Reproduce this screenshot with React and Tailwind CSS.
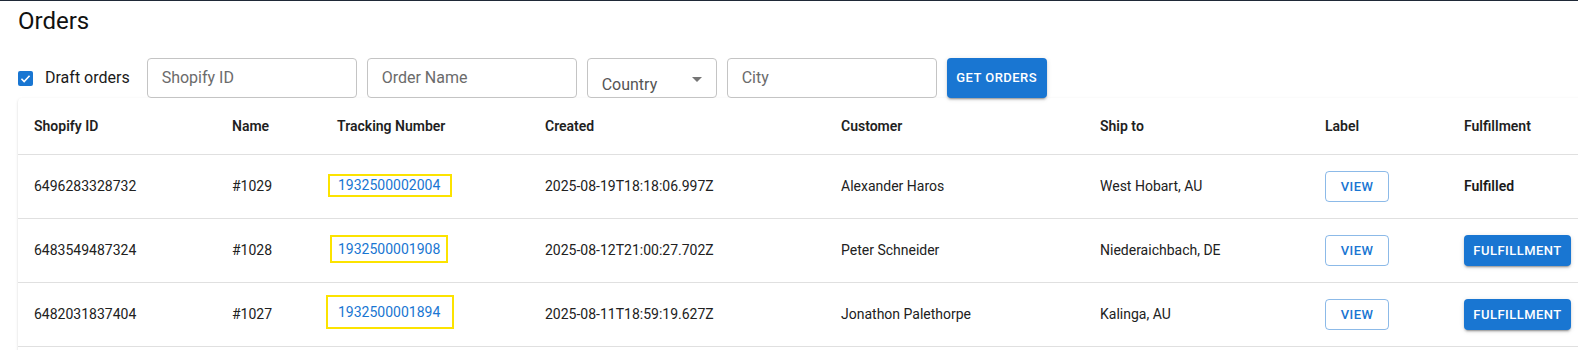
import React from "react";

const cols = "grid grid-cols-[198px_105px_208px_296px_259px_225px_139px_170px]";

const rows = [
  {
    id: "6496283328732",
    name: "#1029",
    tracking: "1932500002004",
    box: "-ml-[9px] pl-[8px] pr-[10px] leading-[19px] -mt-[3px]",
    created: "2025-08-19T18:18:06.997Z",
    customer: "Alexander Haros",
    ship: "West Hobart, AU",
    fulfilled: true,
  },
  {
    id: "6483549487324",
    name: "#1028",
    tracking: "1932500001908",
    box: "-ml-[7px] pl-[6px] pr-[6px] py-[2px] leading-[20px] -mt-[4px]",
    created: "2025-08-12T21:00:27.702Z",
    customer: "Peter Schneider",
    ship: "Niederaichbach, DE",
    fulfilled: false,
  },
  {
    id: "6482031837404",
    name: "#1027",
    tracking: "1932500001894",
    box: "-ml-[11px] pl-[10px] pr-[12px] py-[5px] leading-[20px] -mt-[5px]",
    created: "2025-08-11T18:59:19.627Z",
    customer: "Jonathon Palethorpe",
    ship: "Kalinga, AU",
    fulfilled: false,
  },
];

function Field({ placeholder, w }) {
  return (
    <div
      className={`${w} h-[40px] box-border border border-[#c4c4c4] rounded-[4px] flex items-center pl-[14px] text-[16px] text-[#6b6b6b]`}
    >
      {placeholder}
    </div>
  );
}

export default function App() {
  return (
    <div
      className="w-full h-[350px] overflow-hidden bg-white border-t border-[#1f2937] pl-[18px]"
      style={{ fontFamily: "Roboto, 'Liberation Sans', sans-serif" }}
    >
      <h1 className="mt-[4px] text-[24px] leading-[32px] font-normal text-[#111]">Orders</h1>

      <div className="mt-[21px] h-[40px] flex items-center">
        <div className="w-[15px] h-[15px] rounded-[2px] bg-[#1976d2] flex items-center justify-center">
          <svg width="13" height="13" viewBox="0 0 24 24">
            <path d="M4.5 12.5l5 5 10-10.5" fill="none" stroke="white" strokeWidth="3" />
          </svg>
        </div>
        <span className="ml-[12px] text-[16px] text-[#1a1a1a] leading-[24px]">Draft orders</span>
        <div className="ml-[17px] flex gap-[10px] items-center">
          <Field placeholder="Shopify ID" w="w-[210px]" />
          <Field placeholder="Order Name" w="w-[210px]" />
          <div className="w-[130px] h-[40px] box-border border border-[#c4c4c4] rounded-[4px] relative pl-[14px] text-[16px] text-[#555]">
            <span className="absolute left-[14px] top-[14px] leading-[24px]">Country</span>
            <svg className="absolute right-[7px] top-[8px]" width="24" height="24" viewBox="0 0 24 24">
              <path d="M7 10l5 5 5-5z" fill="#757575" />
            </svg>
          </div>
          <Field placeholder="City" w="w-[210px]" />
          <button className="w-[100px] h-[40px] rounded-[4px] bg-[#1976d2] text-white text-[13px] font-medium tracking-[0.46px] uppercase shadow-[0px_3px_1px_-2px_rgba(0,0,0,0.2),0px_2px_2px_0px_rgba(0,0,0,0.14),0px_1px_5px_0px_rgba(0,0,0,0.12)]">
            Get Orders
          </button>
        </div>
      </div>

      <div className="w-[1600px] bg-white rounded-[4px] shadow-[0px_2px_1px_-1px_rgba(0,0,0,0.2),0px_1px_1px_0px_rgba(0,0,0,0.14),0px_1px_3px_0px_rgba(0,0,0,0.12)]">
        <div className={`${cols} h-[57px] items-center border-b border-[#e0e0e0] text-[14px] font-semibold text-[#1f1f1f]`}>
          <div className="px-4">Shopify ID</div>
          <div className="px-4">Name</div>
          <div className="px-4">Tracking Number</div>
          <div className="px-4">Created</div>
          <div className="px-4">Customer</div>
          <div className="px-4">Ship to</div>
          <div className="px-4">Label</div>
          <div className="px-4">Fulfillment</div>
        </div>
        {rows.map((r) => (
          <div
            key={r.id}
            className={`${cols} h-[64px] items-center border-b border-[#e0e0e0] text-[14px] text-[#212121]`}
          >
            <div className="px-4">{r.id}</div>
            <div className="px-4">{r.name}</div>
            <div className="px-4 flex">
              <span className={`border-2 border-[#fce300] text-[#1976d2] ${r.box}`}>{r.tracking}</span>
            </div>
            <div className="px-4">{r.created}</div>
            <div className="px-4">{r.customer}</div>
            <div className="px-4">{r.ship}</div>
            <div className="px-4 flex">
              <button className="w-[64px] h-[31px] box-border border border-[rgba(25,118,210,0.5)] rounded-[4px] text-[#1976d2] text-[13px] font-medium tracking-[0.46px]">
                VIEW
              </button>
            </div>
            <div className="px-4 flex">
              {r.fulfilled ? (
                <span className="font-semibold text-[#1a1a1a]">Fulfilled</span>
              ) : (
                <button className="w-[107px] h-[31px] rounded-[4px] bg-[#1976d2] text-white text-[13px] font-medium tracking-[0.46px] shadow-[0px_3px_1px_-2px_rgba(0,0,0,0.2),0px_2px_2px_0px_rgba(0,0,0,0.14),0px_1px_5px_0px_rgba(0,0,0,0.12)]">
                  FULFILLMENT
                </button>
              )}
            </div>
          </div>
        ))}
        <div className="h-[64px]" />
      </div>
    </div>
  );
}
